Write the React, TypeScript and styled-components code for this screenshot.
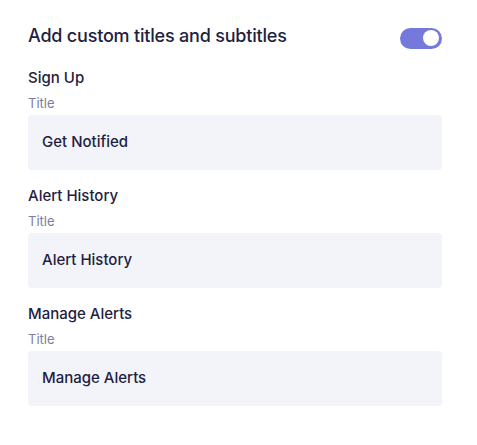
import React from "react";
import styled, { createGlobalStyle } from "styled-components";

const Global = createGlobalStyle`
  html, body { margin: 0; padding: 0; background: #ffffff; }
  body { font-family: Inter, "Noto Sans", sans-serif; -webkit-font-smoothing: antialiased; }
`;

const Panel = styled.div`
  width: 414px;
  padding: 24px 35px 0 28px;
  display: flex;
  flex-direction: column;
`;

const Header = styled.div`
  display: flex;
  align-items: center;
  justify-content: space-between;
  height: 24px;
  margin-bottom: 20px;
`;

const Heading = styled.h2`
  margin: 0;
  font-size: 18px;
  font-weight: 500;
  color: #1f2140;
  letter-spacing: -0.2px;
  line-height: 24px;
`;

const Toggle = styled.div<{ $on: boolean }>`
  width: 42px;
  height: 21px;
  border-radius: 11px;
  background: ${(p) => (p.$on ? "#7479db" : "#d6d7e4")};
  display: flex;
  align-items: center;
  justify-content: ${(p) => (p.$on ? "flex-end" : "flex-start")};
  padding: 0 3px;
  box-sizing: border-box;
  margin-top: 4px;
`;

const Knob = styled.div`
  width: 16px;
  height: 16px;
  border-radius: 50%;
  background: #ffffff;
`;

const Section = styled.div`
  display: flex;
  flex-direction: column;
  margin-bottom: 16px;
`;

const SectionLabel = styled.div`
  font-size: 15px;
  font-weight: 500;
  color: #1f2140;
  line-height: 20px;
  margin-bottom: 7px;
`;

const FieldLabel = styled.div`
  font-size: 13px;
  font-weight: 400;
  color: #7c7d9c;
  line-height: 16px;
  margin-bottom: 4px;
`;

const Field = styled.div`
  height: 55px;
  background: #f3f4f9;
  border-radius: 4px;
  display: flex;
  align-items: center;
  padding: 0 14px 2px;
  box-sizing: border-box;
  font-size: 15px;
  font-weight: 500;
  color: #1f2140;
`;

const sections = [
  { name: "Sign Up", value: "Get Notified" },
  { name: "Alert History", value: "Alert History" },
  { name: "Manage Alerts", value: "Manage Alerts" },
];

export default function App() {
  return (
    <>
      <Global />
      <Panel>
        <Header>
          <Heading>Add custom titles and subtitles</Heading>
          <Toggle $on>
            <Knob />
          </Toggle>
        </Header>
        {sections.map((s) => (
          <Section key={s.name}>
            <SectionLabel>{s.name}</SectionLabel>
            <FieldLabel>Title</FieldLabel>
            <Field>{s.value}</Field>
          </Section>
        ))}
      </Panel>
    </>
  );
}
